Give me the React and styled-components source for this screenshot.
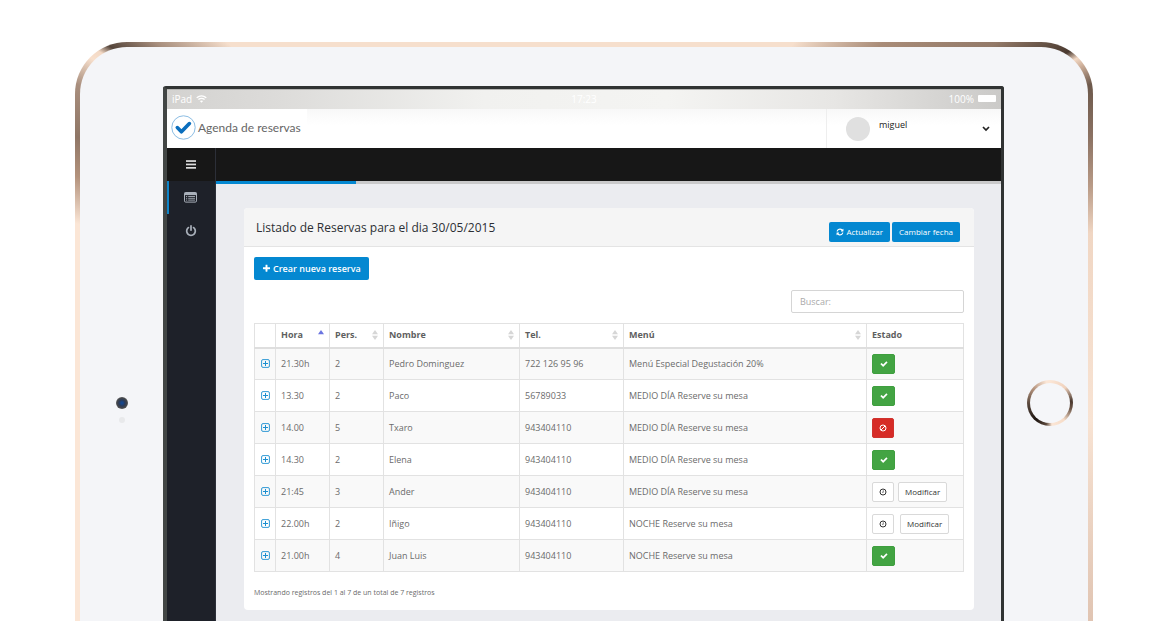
import React from 'react';
import styled, { createGlobalStyle, css } from 'styled-components';

const GlobalStyle = createGlobalStyle`
  *, *::before, *::after { box-sizing: border-box; }
  body {
    margin: 0;
    background: #fff;
    color: #6b6b6b;
    font-family: "Open Sans", "Noto Sans", sans-serif;
    font-size: 9px;
    line-height: 16px;
  }
  button, input { font: inherit; margin: 0; }
  svg { display: block; flex: none; }
`;

/* ---------- tablet ---------- */

const Tablet = styled.div`
  margin: 42px 62px 0 75px;
  padding: 5px 5px 0;
  border-radius: 52px 52px 0 0;
  background: conic-gradient(
    #f6dfcd 0deg, #f6dfcd 36deg, #a98c78 46deg, #937a69 55deg, #4a3a30 60deg,
    #f3d9c5 61deg, #c9ab96 62deg, #6d594c 64deg, #8b7263 69deg, #b99b87 74deg, #f0d6c3 79deg,
    #f8e3d3 100deg, #e0c4b2 120deg, #fbe6d6 180deg, #fbe6d6 282deg,
    #b3927c 287deg, #8f7666 291deg, #a98f7e 296deg, #f8e0cd 299deg,
    #f3d9c5 300deg, #54443a 301deg, #a88f7e 304deg, #f6dfcd 309deg, #f6dfcd 360deg
  );
`;

const Face = styled.div`
  display: grid;
  grid-template-columns: 83px minmax(0, 1fr) 84px;
  padding-top: 39px;
  border-radius: 47px 47px 0 0;
  background: #f4f5f8;
`;

const Bezel = styled.div`
  display: flex;
  flex-direction: column;
  align-items: center;
  gap: 8px;
  padding-top: ${(p) => p.$top}px;
`;

const Camera = styled.div`
  width: 12px;
  height: 12px;
  border-radius: 50%;
  background: radial-gradient(circle, #16468c 0 1px, #2c3b57 3px, #45474b 5px, #5b5c5f 6px);
`;

const Sensor = styled.div`
  width: 6px;
  height: 6px;
  border-radius: 50%;
  background: #e8e9eb;
`;

const HomeButton = styled.div`
  width: 46px;
  height: 46px;
  padding: 3px;
  border-radius: 50%;
  margin-left: 8px;
  background: conic-gradient(#fbe6d6 0deg, #f0d2bd 45deg, #49382e 85deg, #6b5547 105deg,
    #f6dcc8 140deg, #fbe6d6 175deg, #5c493d 190deg, #1d1511 220deg, #54443a 265deg, #b3927c 310deg, #fbe6d6 350deg);
  &::after {
    content: "";
    display: block;
    height: 100%;
    border-radius: 50%;
    background: #f5f6f9;
  }
`;

const Screen = styled.div`
  border: solid #303333;
  border-width: 3px 3px 0 4px;
  border-left-color: #424645;
  border-radius: 3px 3px 0 0;
  background: #ebecf0;
`;

const StatusBar = styled.div`
  display: grid;
  grid-template-columns: 1fr auto 1fr;
  align-items: center;
  height: 20px;
  padding: 0 5px 2px;
  color: #fff;
  font-size: 10px;
  background: linear-gradient(90deg, #d3d2d0 0%, #dddcda 14%, #f1f1ef 38%, #f4f4f2 60%, #e7e6e4 80%, #cbcac8 100%);
  border-top: 1px solid #b5b5b3;
`;

const StatusGroup = styled.span`
  display: flex;
  align-items: center;
  gap: 4px;
  justify-content: ${(p) => (p.$end ? 'flex-end' : 'flex-start')};
`;

const Battery = styled.span`
  width: 18px;
  height: 7px;
  border-radius: 1px;
  background: #fff;
`;

/* ---------- application ---------- */

const Header = styled.header`
  display: flex;
  justify-content: space-between;
  height: 39px;
  background: #fff;
`;

const Brand = styled.a`
  display: flex;
  align-items: center;
  gap: 2px;
  padding: 0 6px 2px 4px;
  color: #666;
  font-family: Lato, "Open Sans", sans-serif;
  font-size: 12px;
  text-decoration: none;
  white-space: nowrap;
`;

const HeaderFill = styled.div`
  flex: 1;
  background: linear-gradient(#f8f8f8, #fff 16px);
`;

const User = styled.div`
  display: flex;
  align-items: center;
  width: 175px;
  padding: 0 11px 0 19px;
  border-left: 1px solid #eee;
  color: #222;
  background: linear-gradient(#f8f8f8, #fff 16px);
`;

const Avatar = styled.span`
  width: 24px;
  height: 24px;
  margin-right: 9px;
  border-radius: 50%;
  background: #e0e0e0;
`;

const UserName = styled.span`
  flex: 1;
  padding-bottom: 8px;
`;

const IconButton = styled.button`
  display: flex;
  align-items: center;
  justify-content: center;
  padding: 0;
  border: 0;
  background: none;
  color: inherit;
`;

const Shell = styled.div`
  display: grid;
  grid-template-columns: 49px minmax(0, 1fr);
`;

const Sidebar = styled.nav`
  display: flex;
  flex-direction: column;
  background: #1e2129;
  border-right: 1px solid #2c2f38;
  color: #a9b0ba;
`;

const MenuToggle = styled(IconButton)`
  height: 33px;
  background: #171717;
  color: #ddd;
`;

const NavLink = styled.a`
  display: flex;
  align-items: center;
  justify-content: center;
  height: 33px;
  padding-right: 3px;
  border-left: 2px solid ${(p) => (p.$active ? '#0d84c9' : 'transparent')};
  color: inherit;
`;

const TopBar = styled.div`
  height: 33px;
  background: #171717;
`;

const Loading = styled.div`
  height: 3px;
  background: #c9c9ca;
  &::before {
    content: "";
    display: block;
    width: 140px;
    height: 3px;
    background: #0488d1;
  }
`;

const Main = styled.main`
  padding: 24px 27px 11px 28px;
`;

const Card = styled.section`
  border-radius: 4px;
  background: #fff;
  overflow: hidden;
`;

const CardHead = styled.div`
  display: flex;
  align-items: flex-start;
  justify-content: space-between;
  height: 39px;
  padding: 10px 14px 0 12px;
  border-bottom: 1px solid #e4e4e4;
  background: #f5f5f5;
`;

const Title = styled.h1`
  margin: 0;
  color: #2c2f34;
  font-size: 12px;
  font-weight: 400;
  line-height: 20px;
`;

const Actions = styled.div`
  display: flex;
  gap: 2px;
  padding-top: 4px;
`;

const Button = styled.button`
  display: inline-flex;
  align-items: center;
  justify-content: center;
  gap: 2px;
  height: ${(p) => (p.$large ? 23 : 20)}px;
  padding: 0 ${(p) => (p.$large ? 8 : 7)}px;
  border: 0;
  border-radius: 2px;
  background: #0488d1;
  color: #fff;
  font-size: ${(p) => (p.$large ? 9 : 8)}px;
  font-weight: ${(p) => (p.$large ? 600 : 400)};
  white-space: nowrap;
`;

const CardBody = styled.div`
  padding: 10px 10px 9px;
`;

const SearchRow = styled.div`
  display: flex;
  justify-content: flex-end;
  padding: 10px 0;
`;

const Search = styled.input`
  width: 173px;
  height: 23px;
  padding: 0 8px;
  border: 1px solid #d5d5d5;
  border-radius: 2px;
  background: #fff;
  color: #555;
  &::placeholder { color: #aaa; opacity: 1; }
`;

const Table = styled.table`
  width: 100%;
  table-layout: fixed;
  border-collapse: collapse;
`;

const Col = styled.col`
  width: ${(p) => (p.$w ? `${p.$w}px` : 'auto')};
`;

const cell = css`
  padding: 0 5px;
  border: 1px solid #e2e2e2;
  text-align: left;
  white-space: nowrap;
`;

const HeadCell = styled.th`
  ${cell}
  height: 24px;
  border-bottom: 2px solid #dedede;
  color: #5f5f5f;
  font-weight: 700;
`;

const SortButton = styled.button`
  display: flex;
  align-items: center;
  justify-content: space-between;
  width: 100%;
  padding: 0;
  border: 0;
  background: none;
  color: inherit;
`;

const Row = styled.tr`
  height: 32px;
  &:nth-child(odd) { background: #f9f9f9; }
`;

const Cell = styled.td`
  ${cell}
`;

const Expand = styled(IconButton)`
  width: 100%;
  color: #1c8fd0;
`;

const tones = {
  ok: css`width: 23px; background: #43a443; color: #fff; border-color: #3f9f3f;`,
  no: css`width: 22px; background: #d62c27; color: #fff; border-color: #d0332e;`,
  plain: css`min-width: 22px; background: #fff; color: #333; border-color: #d9d9d9;`,
};

const StateButton = styled.button`
  display: flex;
  align-items: center;
  justify-content: center;
  height: 20px;
  padding: 0 ${(p) => (p.$text ? 6 : 0)}px;
  border: 1px solid;
  border-radius: 2px;
  font-size: 8px;
  ${(p) => tones[p.$tone]}
`;

const States = styled.div`
  display: flex;
  gap: ${(p) => (p.$wide ? 6 : 4)}px;
`;

const Info = styled.p`
  margin: 0;
  padding-top: 13px;
  font-size: 7px;
`;

/* ---------- icons ---------- */

const Glyph = ({ d, size = 8 }) => (
  <svg width={size} height={size} viewBox="0 0 1792 1792" fill="currentColor" aria-hidden="true">
    <path d={d} />
  </svg>
);

const CHECK = 'M1671 566q0 40-28 68l-724 724-136 136q-28 28-68 28t-68-28l-136-136-362-362q-28-28-28-68t28-68l136-136q28-28 68-28t68 28l294 295 656-657q28-28 68-28t68 28l136 136q28 28 28 68z';
const PLUS = 'M1600 736v192q0 40-28 68t-68 28h-416v416q0 40-28 68t-68 28h-192q-40 0-68-28t-28-68v-416h-416q-40 0-68-28t-28-68v-192q0-40 28-68t68-28h416v-416q0-40 28-68t68-28h192q40 0 68 28t28 68v416h416q40 0 68 28t28 68z';
const REFRESH = 'M1639 1056q0 5-1 7-64 268-268 434.5t-478 166.5q-146 0-282.5-55t-243.5-157l-129 129q-19 19-45 19t-45-19-19-45v-448q0-26 19-45t45-19h448q26 0 45 19t19 45-19 45l-137 137q71 66 161 102t187 36q134 0 250-65t186-179q11-17 53-117 8-23 30-23h192q13 0 22.5 9.5t9.5 22.5zm25-800v448q0 26-19 45t-45 19h-448q-26 0-45-19t-19-45 19-45l138-138q-148-137-349-137-134 0-250 65t-186 179q-11 17-53 117-8 23-30 23h-199q-13 0-22.5-9.5t-9.5-22.5v-7q65-268 270-434.5t480-166.5q146 0 284 55.5t245 156.5l130-129q19-19 45-19t45 19 19 45z';
const POWER = 'M1664 896q0 156-61 298t-164 245-245 164-298 61-298-61-245-164-164-245-61-298q0-182 80.5-343t226.5-270q43-32 95.5-25t83.5 50q32 42 24.5 94.5t-49.5 84.5q-98 74-151.5 181t-53.5 228q0 104 40.5 198.5t109.5 163.5 163.5 109.5 198.5 40.5 198.5-40.5 163.5-109.5 109.5-163.5 40.5-198.5q0-121-53.5-228t-151.5-181q-42-32-49.5-84.5t24.5-94.5q31-43 84-50t95 25q146 109 226.5 270t80.5 343zm-640-768v640q0 52-38 90t-90 38-90-38-38-90v-640q0-52 38-90t90-38 90 38 38 90z';

const LogoMark = () => (
  <svg width="25" height="25" viewBox="0 0 25 25" fill="none" aria-hidden="true">
    <circle cx="12.5" cy="12.5" r="11.7" stroke="#7fb5e0" strokeWidth="0.9" />
    <path d="M6.3 12.6l4.1 4.2 8-8.2" stroke="#0a6ebd" strokeWidth="3.6" strokeLinecap="round" strokeLinejoin="round" />
  </svg>
);

const Wifi = () => (
  <svg width="11" height="8" viewBox="0 0 11 8" fill="none" stroke="#fff" strokeWidth="1.3" aria-hidden="true">
    <path d="M0.7 2.8Q5.5-1.2 10.3 2.8M2.4 4.6Q5.5 2 8.6 4.6" />
    <path d="M3.9 6L5.5 7.8 7.1 6Q5.5 5 3.9 6z" fill="#fff" stroke="none" />
  </svg>
);

const Bars = () => (
  <svg width="10" height="9" viewBox="0 0 10 9" fill="currentColor" aria-hidden="true">
    <rect y="0.2" width="10" height="1.7" />
    <rect y="3.6" width="10" height="1.7" />
    <rect y="7" width="10" height="1.7" />
  </svg>
);

const ListIcon = () => (
  <svg width="13" height="11" viewBox="0 0 13 11" aria-hidden="true">
    <rect x="0.5" y="0.5" width="12" height="9.6" rx="1.2" fill="none" stroke="currentColor" />
    <rect x="0.5" y="0.5" width="12" height="2.6" fill="currentColor" />
    <path d="M2 4.5h1.2M4.2 4.5H11M2 6.3h1.2M4.2 6.3H11M2 8.1h1.2M4.2 8.1H11" stroke="currentColor" strokeWidth="0.9" />
  </svg>
);

const Chevron = () => (
  <svg width="8" height="6" viewBox="0 0 8 6" fill="none" stroke="currentColor" strokeWidth="1.7" aria-hidden="true">
    <path d="M1 1l3 3 3-3" />
  </svg>
);

const SquarePlus = () => (
  <svg width="9" height="9" viewBox="0 0 9 9" fill="none" stroke="currentColor" aria-hidden="true">
    <rect x="0.6" y="0.6" width="7.8" height="7.8" rx="1.4" strokeWidth="0.9" />
    <path d="M4.5 2v5M2 4.5h5" strokeWidth="1" />
  </svg>
);

const Ban = () => (
  <svg width="8" height="8" viewBox="0 0 8 8" fill="none" stroke="currentColor" strokeWidth="1" aria-hidden="true">
    <circle cx="4" cy="4" r="3" />
    <path d="M2 6l4-4" />
  </svg>
);

const Clock = () => (
  <svg width="8" height="8" viewBox="0 0 8 8" fill="none" stroke="currentColor" strokeWidth="1" aria-hidden="true">
    <circle cx="4" cy="4" r="3" />
    <path d="M4.3 2.2v2.1H3" strokeWidth="0.6" />
  </svg>
);

const SortIcon = ({ active }) => (
  <svg width="6" height="10" viewBox="0 0 6 10" aria-hidden="true">
    <path d="M3 0l3 4.3H0z" fill={active ? '#6a74e0' : '#d6d6d6'} />
    {!active && <path d="M3 10l3-4.3H0z" fill="#d6d6d6" />}
  </svg>
);

/* ---------- data ---------- */

const columns = [
  { label: 'Hora', width: 54, active: true },
  { label: 'Pers.', width: 54 },
  { label: 'Nombre', width: 136 },
  { label: 'Tel.', width: 104 },
  { label: 'Menú' },
];

const rows = [
  ['21.30h', '2', 'Pedro Dominguez', '722 126 95 96', 'Menú Especial Degustación 20%', 'ok'],
  ['13.30', '2', 'Paco', '56789033', 'MEDIO DÍA Reserve su mesa', 'ok'],
  ['14.00', '5', 'Txaro', '943404110', 'MEDIO DÍA Reserve su mesa', 'no'],
  ['14.30', '2', 'Elena', '943404110', 'MEDIO DÍA Reserve su mesa', 'ok'],
  ['21:45', '3', 'Ander', '943404110', 'MEDIO DÍA Reserve su mesa', 'pending'],
  ['22.00h', '2', 'Iñigo', '943404110', 'NOCHE Reserve su mesa', 'pending-wide'],
  ['21.00h', '4', 'Juan Luis', '943404110', 'NOCHE Reserve su mesa', 'ok'],
];

const State = ({ value }) => {
  if (value === 'ok') {
    return <StateButton $tone="ok" aria-label="Confirmada"><Glyph d={CHECK} /></StateButton>;
  }
  if (value === 'no') {
    return <StateButton $tone="no" aria-label="Cancelada"><Ban /></StateButton>;
  }
  return (
    <States $wide={value === 'pending-wide'}>
      <StateButton $tone="plain" aria-label="Pendiente"><Clock /></StateButton>
      <StateButton $tone="plain" $text>Modificar</StateButton>
    </States>
  );
};

export default function App() {
  return (
    <>
      <GlobalStyle />
      <Tablet>
        <Face>
          <Bezel $top={311}>
            <Camera />
            <Sensor />
          </Bezel>
          <Screen>
            <StatusBar>
              <StatusGroup>iPad <Wifi /></StatusGroup>
              <span>17:23</span>
              <StatusGroup $end>100% <Battery /></StatusGroup>
            </StatusBar>
            <Header>
              <Brand href="#inicio"><LogoMark />Agenda de reservas</Brand>
              <HeaderFill />
              <User>
                <Avatar />
                <UserName>miguel</UserName>
                <IconButton aria-label="Opciones de usuario"><Chevron /></IconButton>
              </User>
            </Header>
            <Shell>
              <Sidebar>
                <MenuToggle aria-label="Menú"><Bars /></MenuToggle>
                <NavLink href="#reservas" aria-label="Reservas" $active><ListIcon /></NavLink>
                <NavLink href="#salir" aria-label="Salir"><Glyph d={POWER} size={12} /></NavLink>
              </Sidebar>
              <div>
                <TopBar />
                <Loading />
                <Main>
                  <Card>
                    <CardHead>
                      <Title>Listado de Reservas para el dia 30/05/2015</Title>
                      <Actions>
                        <Button><Glyph d={REFRESH} />Actualizar</Button>
                        <Button>Cambiar fecha</Button>
                      </Actions>
                    </CardHead>
                    <CardBody>
                      <Button $large><Glyph d={PLUS} size={9} />Crear nueva reserva</Button>
                      <SearchRow>
                        <Search type="search" placeholder="Buscar:" aria-label="Buscar" />
                      </SearchRow>
                      <Table>
                        <colgroup>
                          <Col $w={21} />
                          {columns.map((c) => <Col key={c.label} $w={c.width} />)}
                          <Col $w={97} />
                        </colgroup>
                        <thead>
                          <tr>
                            <HeadCell />
                            {columns.map((c) => (
                              <HeadCell key={c.label} aria-sort={c.active ? 'ascending' : undefined}>
                                <SortButton>{c.label}<SortIcon active={c.active} /></SortButton>
                              </HeadCell>
                            ))}
                            <HeadCell>Estado</HeadCell>
                          </tr>
                        </thead>
                        <tbody>
                          {rows.map(([hora, pers, nombre, tel, menu, estado]) => (
                            <Row key={hora}>
                              <Cell><Expand aria-label="Ver detalle"><SquarePlus /></Expand></Cell>
                              <Cell>{hora}</Cell>
                              <Cell>{pers}</Cell>
                              <Cell>{nombre}</Cell>
                              <Cell>{tel}</Cell>
                              <Cell>{menu}</Cell>
                              <Cell><State value={estado} /></Cell>
                            </Row>
                          ))}
                        </tbody>
                      </Table>
                      <Info>Mostrando registros del 1 al 7 de un total de 7 registros</Info>
                    </CardBody>
                  </Card>
                </Main>
              </div>
            </Shell>
          </Screen>
          <Bezel $top={294}>
            <HomeButton />
          </Bezel>
        </Face>
      </Tablet>
    </>
  );
}
